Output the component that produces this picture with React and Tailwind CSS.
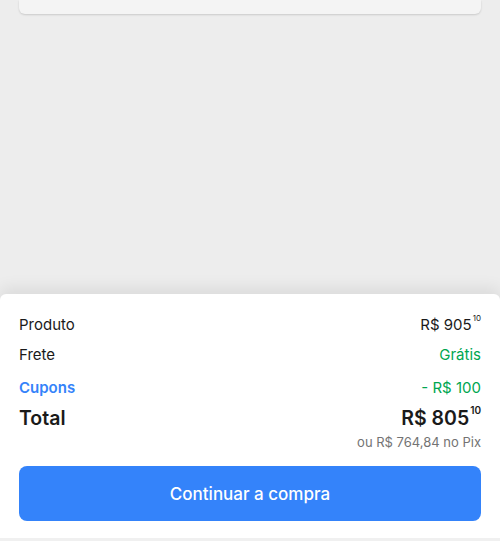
const rows = [
	{ label: 'Produto', value: 'R$ 905', cents: '10', tone: 'text-[#1a1a1a]' },
	{ label: 'Frete', value: 'Grátis', tone: 'text-[#00a650]' },
];

const Price = ({ value, cents, className, centsClass }) => (
	<span className={`flex items-start ${className}`}>
		<span>{value}</span>
		{cents && <span className={centsClass}>{cents}</span>}
	</span>
);

const App = () => {
	return (
		<div className="h-[541px] w-full bg-[#ededed] flex flex-col overflow-hidden" style={{ fontFamily: '"Inter", "Open Sans", sans-serif' }}>
			{/* Card scrolled off the top */}
			<div className="mx-[19px] h-[14px] rounded-b-md bg-[#f4f4f4] shadow-[0_1px_2px_rgba(0,0,0,0.15)]" />

			<div className="flex-1" />

			{/* Resumo da compra */}
			<div className="bg-white rounded-t-md shadow-[0_-6px_16px_rgba(0,0,0,0.08)] px-[19px] pt-[21px] pb-[17px]">
				<div className="flex flex-col">
					{rows.map(({ label, value, cents, tone }, i) => (
						<div key={label} className={`flex items-center justify-between h-5 text-[15px] ${i > 0 ? 'mt-[10px]' : ''}`}>
							<span className="text-[#1a1a1a]">{label}</span>
							<Price value={value} cents={cents} className={tone} centsClass="text-[8px] leading-none ml-[1px]" />
						</div>
					))}

					<div className="flex items-center justify-between h-5 mt-[13px] text-[15px]">
						<span className="text-[#3483fa] font-semibold">Cupons</span>
						<span className="text-[#00a650]">- R$ 100</span>
					</div>

					<div className="flex items-center justify-between h-6 mt-[9px]">
						<span className="text-[19.5px] font-semibold text-[#1a1a1a]">Total</span>
						<Price value="R$ 805" cents="10" className="text-[19.5px] font-semibold text-[#1a1a1a]" centsClass="text-[10px] leading-none mt-[1px] ml-[1px]" />
					</div>

					<div className="flex justify-end h-4 mt-[3px]">
						<span className="text-[13px] text-[#737373] leading-4">ou R$ 764,84 no Pix</span>
					</div>

					<button className="mt-[16px] h-[55px] w-full rounded-lg bg-[#3483fa] text-white text-[17px] font-medium pt-[3px]">
						Continuar a compra
					</button>
				</div>
			</div>
			<div className="h-[3px] bg-[#f0f0f0]" />
		</div>
	);
};

export default App;
